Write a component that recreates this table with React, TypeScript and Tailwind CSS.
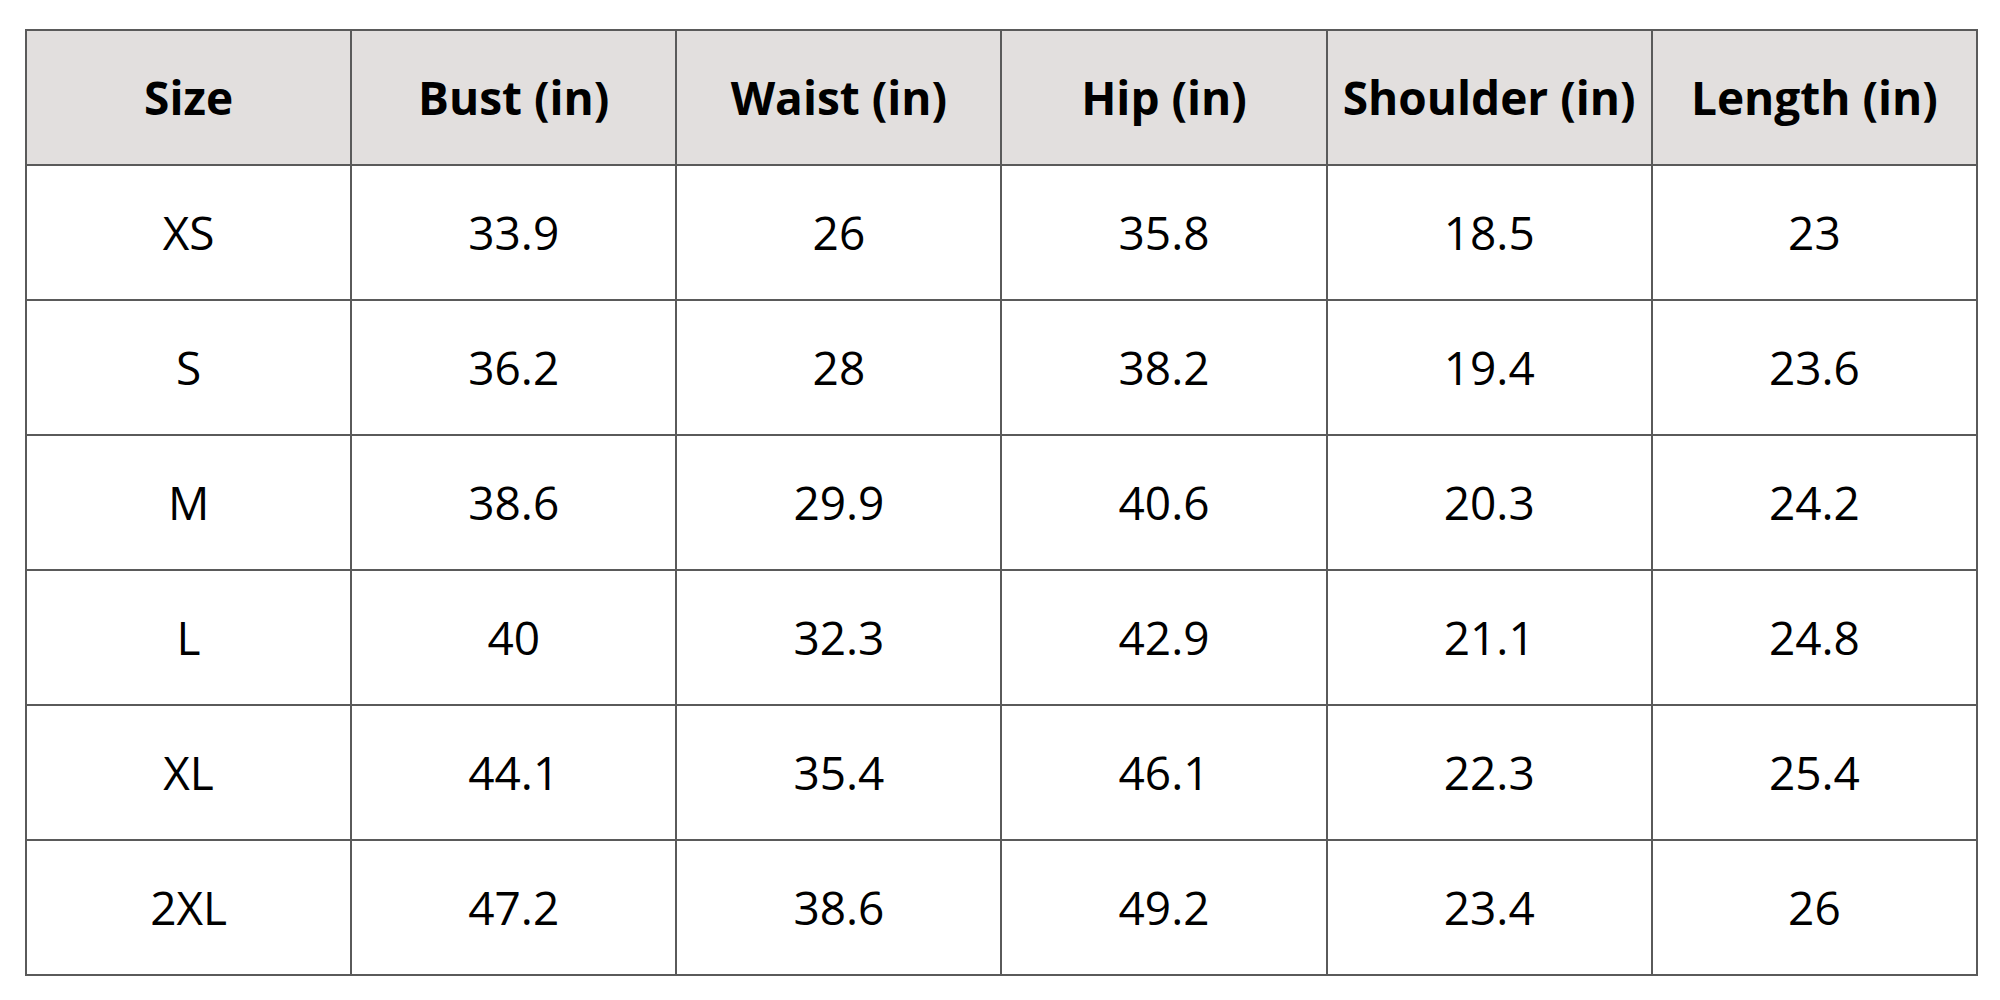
const headers = ["Size", "Bust (in)", "Waist (in)", "Hip (in)", "Shoulder (in)", "Length (in)"]

const rows = [
  ["XS", "33.9", "26", "35.8", "18.5", "23"],
  ["S", "36.2", "28", "38.2", "19.4", "23.6"],
  ["M", "38.6", "29.9", "40.6", "20.3", "24.2"],
  ["L", "40", "32.3", "42.9", "21.1", "24.8"],
  ["XL", "44.1", "35.4", "46.1", "22.3", "25.4"],
  ["2XL", "47.2", "38.6", "49.2", "23.4", "26"],
]

export default function App() {
  return (
    <div className="w-[2000px] h-[1000px] bg-white pt-[29px] pl-[25px] font-['Open_Sans','Liberation_Sans',sans-serif] text-black">
      <table className="w-[1953px] table-fixed border-collapse">
        <thead>
          <tr className="h-[135px] bg-[#e2dfde]">
            {headers.map((h) => (
              <th key={h} className="border-2 border-[#5a5a5a] text-[46px] font-bold text-center align-middle">
                {h}
              </th>
            ))}
          </tr>
        </thead>
        <tbody>
          {rows.map((row) => (
            <tr key={row[0]} className="h-[135px]">
              {row.map((cell, i) => (
                <td key={i} className="border-2 border-[#5a5a5a] text-[46px] text-center align-middle">
                  {cell}
                </td>
              ))}
            </tr>
          ))}
        </tbody>
      </table>
    </div>
  )
}
